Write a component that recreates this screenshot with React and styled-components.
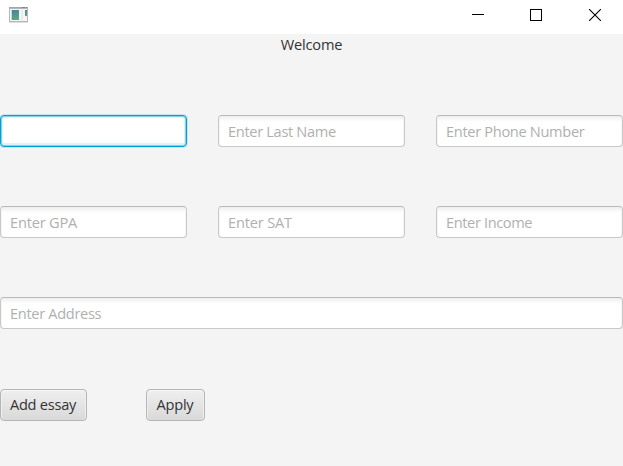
import React from "react";
import styled, { createGlobalStyle, css } from "styled-components";

const GlobalStyle = createGlobalStyle`
  *, *::before, *::after { box-sizing: border-box; }
  body { margin: 0; overflow: hidden; background: #f4f4f4; }
`;

const Window = styled.div`
  width: 623px;
  height: 466px;
  display: flex;
  flex-direction: column;
  background: #f4f4f4;
  color: #333;
  font-family: "Open Sans", "Noto Sans", sans-serif;
  font-size: 14.6px;
`;

const TitleBar = styled.header`
  height: 34px;
  flex: none;
  display: flex;
  justify-content: space-between;
  padding: 7px 22px 0 9px;
  background: #fff;
`;

const WindowControls = styled.div`
  display: grid;
  grid-template-columns: 58px 59px 12px;
  padding-top: 2px;
  svg { display: block; }
`;

const Scene = styled.main`
  flex: 1;
  display: flex;
  flex-direction: column;
`;

const Welcome = styled.h1`
  margin: 0;
  height: 21px;
  text-align: center;
  font-size: inherit;
  font-weight: 400;
  line-height: 21px;
  letter-spacing: -0.2px;
`;

const Form = styled.form`
  display: grid;
  grid-template-columns: repeat(3, 187px);
  column-gap: 31px;
  row-gap: 59px;
  padding-top: 60px;
`;

const focusRing = css`
  border-color: #039ed3;
  box-shadow: 0 0 0 1px rgba(3, 158, 211, 0.18), inset 0 0 0 1px #8bd0e8,
    inset 0 0 0 2px #e0f2f9, inset 0 -1px 0 2px #e0f2f9;
`;

const TextField = styled.input`
  grid-column: span ${(p) => p.$span || 1};
  width: 100%;
  height: 32px;
  margin: 0;
  padding: 0 9px;
  border: 1px solid #c8c8c8;
  border-top-color: #b9b9b9;
  border-radius: 4px;
  outline: none;
  background: linear-gradient(#eeeeee, #fafafa 4px, #fff 6px);
  box-shadow: inset 1px 0 0 #f5f5f5, inset -1px 0 0 #f5f5f5;
  font: inherit;
  letter-spacing: ${(p) => p.$tracking ?? -0.32}px;
  color: #333;
  caret-color: transparent;
  &::placeholder { color: #b0b0b0; opacity: 1; }
  ${(p) => p.$focused && css`background: #fff; ${focusRing}`}
`;

const Actions = styled.div`
  grid-column: 1 / -1;
  display: flex;
  gap: 59px;
  padding-top: 1px;
`;

const Button = styled.button`
  width: ${(p) => p.$width}px;
  height: 32px;
  padding: 0 1px 2px 0;
  border: 1px solid #b5b5b5;
  border-radius: 4px;
  background: linear-gradient(#efefef, #d9d9d9);
  box-shadow: inset 0 1px 0 #f8f8f8, inset 1px 0 0 #efefef, inset -1px 0 0 #efefef;
  font: inherit;
  letter-spacing: -0.25px;
  color: #333;
  white-space: nowrap;
`;

const AppIcon = () => (
  <svg width="19" height="16" viewBox="0 0 19 16" shapeRendering="crispEdges">
    <defs>
      <linearGradient id="pane" x1="0.2" y1="0" x2="0.5" y2="1">
        <stop offset="0" stopColor="#4a7fa8" />
        <stop offset="1" stopColor="#54ad78" />
      </linearGradient>
    </defs>
    <rect x="0" y="0" width="19" height="15" fill="#b3b6bb" />
    <rect x="1" y="2" width="17" height="12" fill="#f4f4f5" />
    <rect x="0" y="0" width="19" height="1" fill="#a0a5ae" />
    <rect x="13" y="0" width="3" height="1" fill="#7c8491" />
    <rect x="17" y="0" width="1" height="1" fill="#7c8491" />
    <rect x="0" y="15" width="19" height="1" fill="#dedede" />
    <rect x="2" y="3" width="8" height="10" fill="#c9d5d8" />
    <rect x="3" y="3" width="7" height="10" fill="url(#pane)" />
    <rect x="12" y="3" width="2" height="10" fill="#ebecee" />
    <rect x="16" y="3" width="2" height="6" fill="url(#pane)" />
  </svg>
);

const MinimizeIcon = () => (
  <svg width="12" height="12" viewBox="0 0 12 12">
    <path d="M0 5.5H12" stroke="#000" />
  </svg>
);

const MaximizeIcon = () => (
  <svg width="12" height="12" viewBox="0 0 12 12">
    <rect x="0.5" y="0.5" width="11" height="11" fill="none" stroke="#000" />
  </svg>
);

const CloseIcon = () => (
  <svg width="12" height="12" viewBox="0 0 12 12">
    <path d="M0 0L12 12M12 0L0 12" stroke="#000" strokeWidth="1.1" />
  </svg>
);

export default function App() {
  return (
    <>
      <GlobalStyle />
      <Window>
        <TitleBar>
          <AppIcon />
          <WindowControls>
            <MinimizeIcon />
            <MaximizeIcon />
            <CloseIcon />
          </WindowControls>
        </TitleBar>
        <Scene>
          <Welcome>Welcome</Welcome>
          <Form>
            <TextField $focused aria-label="First name" />
            <TextField placeholder="Enter Last Name" $tracking={-0.32} />
            <TextField placeholder="Enter Phone Number" />
            <TextField placeholder="Enter GPA" $tracking={-0.2} />
            <TextField placeholder="Enter SAT" $tracking={-0.18} />
            <TextField placeholder="Enter Income" $tracking={-0.38} />
            <TextField placeholder="Enter Address" $span={3} />
            <Actions>
              <Button type="button" $width={87}>Add essay</Button>
              <Button type="button" $width={59}>Apply</Button>
            </Actions>
          </Form>
        </Scene>
      </Window>
    </>
  );
}
